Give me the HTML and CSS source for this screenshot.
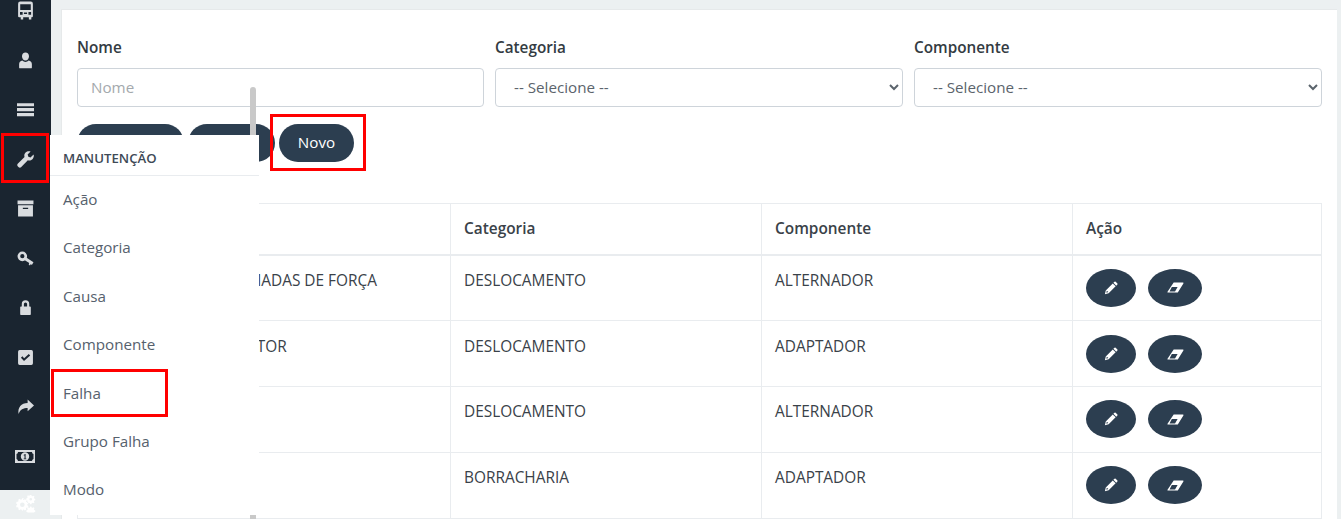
FILE: index.html
```html
<!DOCTYPE html>
<html lang="pt">
<head>
<meta charset="utf-8">
<title>Falha</title>
<link rel="stylesheet" href="styles.css">
</head>
<body>
<div class="app">
  <aside class="sidebar">
    <nav class="side-nav">
      <a class="side-item"><svg viewBox="0 0 16 18" class="ic ic-tall"><path d="M3 0.500h10a2 2 0 0 1 2 2v12a1 1 0 0 1-1 1h-.5v2h-2.300v-2H5.800v2H3.500v-2H2a1 1 0 0 1-1-1v-12a2 2 0 0 1 2-2zM3 3v5.500h10V3zM2.800 10.500v2.500h2.500v-2.500zm8 0v2.500h2.500v-2.500zM6.500 11v1.200h3V11z" fill-rule="evenodd"/></svg></a>
      <a class="side-item"><svg viewBox="0 0 16 16" class="ic"><path d="M8 .5c2 0 3.300 1.500 3.300 3.500S10 8 8 8 4.700 6 4.700 4 6 .5 8 .5zM5 8c.8.900 1.900 1.300 3 1.300s2.200-.4 3-1.300c1.800.5 3 1.500 3 3.500v3a.8.800 0 0 1-.8.800H2.800a.8.800 0 0 1-.8-.8v-3C2 9.500 3.200 8.500 5 8z"/></svg></a>
      <a class="side-item"><svg viewBox="0 0 16 16" class="ic"><path d="M0 2h16v3H0zM0 6.700h16v3H0zM0 11.400h16v3H0z"/></svg></a>
      <a class="side-item"><svg viewBox="0 0 16 16" class="ic"><path d="M15.600 3.200l-2.900 2.800-2-.7-.7-2L12.800.4C11 -.2 9.300.2 8.100 1.400 6.900 2.600 6.600 4.300 7.100 5.700L.7 12.100c-.6.600-.6 1.600 0 2.200l.9.900c.6.600 1.600.6 2.200 0l6.400-6.400c1.400.5 3.100.2 4.300-1 1.200-1.200 1.600-3 1.100-4.600z"/></svg></a>
      <a class="side-item"><svg viewBox="0 0 16 16" class="ic"><path d="M.5 .5h15v3.500H.5zM1 5h14v10.500H1zM5.500 7.200v1.300h5V7.200z" fill-rule="evenodd"/></svg></a>
      <a class="side-item"><svg viewBox="0 0 16 16" class="ic"><path d="M5 1.500a4.500 4.500 0 1 1 0 9 4.500 4.500 0 0 1 0-9zM5 3.800a2 2 0 1 0 0 4 2 2 0 0 0 0-4z" fill-rule="evenodd"/><path d="M8 6.500l7.500 5-1.500 2.500-1-.8-.8 1.300-1.200-.9.500-1.300-4.500-2.800z"/></svg></a>
      <a class="side-item"><svg viewBox="0 0 16 16" class="ic"><path d="M4.500 7V4.700a3.500 3.500 0 0 1 7 0V7h.8c.4 0 .7.300.7.700v6.600c0 .4-.3.700-.7.700H3.700a.7.700 0 0 1-.7-.7V7.700c0-.4.300-.7.700-.7zm2 0h3V4.700a1.500 1.500 0 0 0-3 0z" fill-rule="evenodd"/></svg></a>
      <a class="side-item"><svg viewBox="0 0 16 16" class="ic"><path d="M2.500 1h11A1.500 1.500 0 0 1 15 2.500v11a1.500 1.500 0 0 1-1.500 1.500h-11A1.500 1.500 0 0 1 1 13.500v-11A1.500 1.500 0 0 1 2.500 1zm1.200 7.200L6.600 11.400l5.800-5.400-1.300-1.300-4.400 4.100-1.600-1.900z" fill-rule="evenodd"/></svg></a>
      <a class="side-item"><svg viewBox="0 0 16 16" class="ic"><path d="M10 1.500l6 5.500-6 5.500V9.300C6 9.300 3 10.500 1.500 15 .5 9 4 4.800 10 4.700z"/></svg></a>
      <a class="side-item"><svg viewBox="0 0 20 16" class="ic ic-wide"><path d="M0 1.500h20v13H0zM3 3.500c0 1-.8 2-1.500 2v5c.7 0 1.300 1 1.500 2h14c.2-1 .8-2 1.500-2v-5c-.7 0-1.500-1-1.500-2zM10 3.800a4.200 4.200 0 1 1 0 8.400 4.200 4.200 0 0 1 0-8.400zM9.500 5.500v.8h-.8v.8h.8v2.800h-.8v.8h2.600v-.8h-.7V5.500z" fill-rule="evenodd"/></svg></a>
    </nav>
    <div class="side-foot"><svg viewBox="0 0 20 18" class="ic-gears"><path d="M7.500 4.500l1 .3.8-.9 1.500.9-.4 1.100.7.800 1.200-.1.500 1.700-1.100.5v1l1.100.6-.5 1.600-1.200-.1-.7.800.4 1.100-1.500.9-.8-.9-1 .2-.5 1.100H6.800l-.4-1.200-1-.3-.9.900-1.500-.9.400-1.200-.7-.7-1.200.1L1 10.100l1-.6v-1l-1-.5.500-1.700 1.200.1.700-.8-.4-1.100 1.500-.9.900.9 1-.3.400-1.100h1.700zM7 7a2.200 2.200 0 1 0 0 4.400A2.200 2.200 0 0 0 7 7zM15.500 0l.5 1 .9.200.9-.5.800.9-.5.800.2.900 1 .4v1.200l-1 .4-.3.900.6.800-.9.900-.9-.5-.9.300-.3 1h-1.200l-.3-1-.9-.3-.9.500-.8-.9.500-.9-.3-.8-1-.4V3.200l1-.4.300-.9-.5-.8.800-.9.900.5.900-.2.300-1zM15 2.700a1.300 1.300 0 1 0 0 2.600 1.300 1.300 0 0 0 0-2.600zM15.500 11l.5 1 .9.200.9-.5.800.9-.5.800.2.900 1 .4v1.200l-1 .4-.2.300h-6l-.3-.3-1-.4v-1.200l1-.4.300-.9-.5-.8.800-.9.900.5.900-.2.300-1z" fill-rule="evenodd"/></svg></div>
  </aside>
  <main class="main">
    <section class="card">
      <form class="filters">
        <div class="field"><label class="label">Nome</label><input class="input" placeholder="Nome"></div>
        <div class="field"><label class="label">Categoria</label><select class="input select"><option>-- Selecione --</option></select></div>
        <div class="field"><label class="label">Componente</label><select class="input select"><option>-- Selecione --</option></select></div>
      </form>
      <div class="actions">
        <button class="btn btn-search" type="button" aria-label="Pesquisar"></button>
        <button class="btn btn-clear" type="button" aria-label="Limpar"></button>
        <button class="btn btn-new" type="button">Novo</button>
      </div>
      <table class="table">
        <thead>
          <tr><th class="col-name"></th><th class="col-cat">Categoria</th><th class="col-comp">Componente</th><th>Ação</th></tr>
        </thead>
        <tbody>
          <tr><td>SOBRECARGA NAS TOMADAS DE FORÇA</td><td>DESLOCAMENTO</td><td>ALTERNADOR</td><td class="cell-actions"><button class="round round-edit" type="button"><svg viewBox="0 0 16 16" class="ic-btn"><path d="M12 .8a1 1 0 0 1 1.300 0l2 2a1 1 0 0 1 0 1.300L14 5.400 10.700 2zM10 2.800l3.300 3.300-8 8L1 15.200 2 10.800zM3.200 11l-.5 2.300 2.300-.6z" fill-rule="evenodd"/></svg></button><button class="round round-erase" type="button"><svg viewBox="0 0 18 12" class="ic-erase"><path d="M7 .5H17a.8.800 0 0 1 .6 1.200L11.500 11.500H.8a.6.600 0 0 1-.5-1zM5 5.500L2.500 10.300h6L11.300 5.500z" fill-rule="evenodd"/></svg></button></td></tr>
          <tr><td>FALHA EM LIGAR O MOTOR</td><td>DESLOCAMENTO</td><td>ADAPTADOR</td><td class="cell-actions"><button class="round round-edit" type="button"><svg viewBox="0 0 16 16" class="ic-btn"><path d="M12 .8a1 1 0 0 1 1.300 0l2 2a1 1 0 0 1 0 1.300L14 5.400 10.700 2zM10 2.800l3.300 3.300-8 8L1 15.200 2 10.800zM3.200 11l-.5 2.300 2.300-.6z" fill-rule="evenodd"/></svg></button><button class="round round-erase" type="button"><svg viewBox="0 0 18 12" class="ic-erase"><path d="M7 .5H17a.8.800 0 0 1 .6 1.200L11.500 11.500H.8a.6.600 0 0 1-.5-1zM5 5.500L2.500 10.300h6L11.300 5.500z" fill-rule="evenodd"/></svg></button></td></tr>
          <tr><td></td><td>DESLOCAMENTO</td><td>ALTERNADOR</td><td class="cell-actions"><button class="round round-edit" type="button"><svg viewBox="0 0 16 16" class="ic-btn"><path d="M12 .8a1 1 0 0 1 1.300 0l2 2a1 1 0 0 1 0 1.300L14 5.400 10.700 2zM10 2.800l3.300 3.300-8 8L1 15.200 2 10.800zM3.200 11l-.5 2.300 2.300-.6z" fill-rule="evenodd"/></svg></button><button class="round round-erase" type="button"><svg viewBox="0 0 18 12" class="ic-erase"><path d="M7 .5H17a.8.800 0 0 1 .6 1.200L11.500 11.500H.8a.6.600 0 0 1-.5-1zM5 5.500L2.500 10.300h6L11.300 5.500z" fill-rule="evenodd"/></svg></button></td></tr>
          <tr><td></td><td>BORRACHARIA</td><td>ADAPTADOR</td><td class="cell-actions"><button class="round round-edit" type="button"><svg viewBox="0 0 16 16" class="ic-btn"><path d="M12 .8a1 1 0 0 1 1.300 0l2 2a1 1 0 0 1 0 1.300L14 5.400 10.700 2zM10 2.800l3.300 3.300-8 8L1 15.200 2 10.800zM3.200 11l-.5 2.300 2.300-.6z" fill-rule="evenodd"/></svg></button><button class="round round-erase" type="button"><svg viewBox="0 0 18 12" class="ic-erase"><path d="M7 .5H17a.8.800 0 0 1 .6 1.200L11.500 11.500H.8a.6.600 0 0 1-.5-1zM5 5.500L2.500 10.300h6L11.300 5.500z" fill-rule="evenodd"/></svg></button></td></tr>
        </tbody>
      </table>
    </section>
  </main>
  <div class="scroll-thumb"></div>
  <div class="flyout">
    <div class="flyout-title">MANUTENÇÃO</div>
    <a class="flyout-item">Ação</a>
    <a class="flyout-item">Categoria</a>
    <a class="flyout-item">Causa</a>
    <a class="flyout-item">Componente</a>
    <a class="flyout-item">Falha</a>
    <a class="flyout-item">Grupo Falha</a>
    <a class="flyout-item">Modo</a>
  </div>
  <div class="mark mark-tool"></div>
  <div class="mark mark-new"></div>
  <div class="mark mark-falha"></div>
</div>
</body>
</html>
```
FILE: styles.css
```css
* { box-sizing: border-box; }
html, body { margin: 0; height: 100%; overflow: hidden; }
body { font-family: "Open Sans", sans-serif; font-size: 15.2px; color: #3a4249; background: #ecf0f1; }
.app { position: relative; display: flex; width: 1341px; height: 519px; overflow: hidden; }
.sidebar { width: 51px; flex: none; height: 519px; display: flex; flex-direction: column; background: #ecf0f1; }
.side-nav { background: #1a2530; display: flex; flex-direction: column; margin-top: -14px; flex: none; height: 504px; }
.side-item { height: 49.5px; display: flex; align-items: center; justify-content: center; flex: none; padding-right: 1px; }
.ic { width: 17px; height: 17px; fill: #d9dcdf; }
.ic-tall { height: 19px; }
.ic-wide { width: 20px; }
.side-foot { height: 29px; display: flex; align-items: center; justify-content: center; padding-right: 1px; }
.ic-gears { width: 21px; height: 19px; fill: #fff; }
.main { flex: 1; min-width: 0; padding: 9px 4px 0 10px; }
.card { background: #fff; border: 1px solid #e6e9ea; border-right: 0; height: 540px; padding: 27px 15px 0 15px; }
.filters { display: grid; grid-template-columns: 407px 408px 408px; column-gap: 11px; }
.field { display: flex; flex-direction: column; }
.label { font-weight: 600; font-size: 15.3px; line-height: 20px; margin-bottom: 11px; color: #333b42; }
.input { height: 39px; width: 100%; border: 1px solid #ced4da; border-radius: 4px; background: #fff; padding: 0 13px 2px; font: 15.2px "Open Sans", sans-serif; color: #5b646c; }
.input::placeholder { color: #a4a9ad; opacity: 1; }
.select { padding: 0 10px 2px 14px; }
.actions { display: flex; gap: 4px; margin-top: 17px; }
.btn { height: 38px; border: 0; border-radius: 19px; background: #2c3e50; color: #fff; font: 15.2px "Open Sans", sans-serif; padding: 0 0 2px; }
.btn-search { width: 107px; }
.btn-clear { width: 87px; }
.btn-new { width: 75px; }
.table { border-collapse: collapse; table-layout: fixed; width: 100%; margin-top: 41px; border: 1px solid #e9ecef; font-size: 15.4px; }
.table th { height: 51px; padding: 0 13px; text-align: left; font-weight: 600; color: #3a4249; border: 1px solid #e9ecef; border-bottom-width: 2px; }
.table td { height: 66px; padding: 15px 13px 0; vertical-align: top; border: 1px solid #e9ecef; line-height: 20px; }
.table tr:nth-child(2) td { padding-top: 16px; }
.col-name { width: 373px; }
.col-cat { width: 311px; }
.col-comp { width: 311px; }
.table td.cell-actions { padding-top: 13px; }
.table tr:nth-child(2) td.cell-actions { padding-top: 14px; }
.round { height: 38px; border: 0; border-radius: 50%; background: #2c3e50; padding: 0; display: inline-flex; align-items: center; justify-content: center; vertical-align: top; }
.round-edit { width: 50px; margin-right: 12px; }
.round-erase { width: 54px; }
.ic-btn { width: 14px; height: 14px; fill: #fff; }
.ic-erase { width: 17px; height: 11px; fill: #fff; }
.scroll-thumb { position: absolute; left: 250px; top: 87px; width: 6px; height: 445px; background: #c9c9c9; border-radius: 3px; }
.flyout { position: absolute; left: 50px; top: 135px; width: 209px; height: 380px; background: #fff; }
.flyout-title { height: 41px; padding: 6px 13px 0; display: flex; align-items: center; font-size: 13.2px; font-weight: 600; color: #3e4a56; border-bottom: 1px solid #e9ecef; }
.flyout-item { display: block; height: 48.4px; padding: 0 13px; line-height: 47.5px; font-size: 15.2px; color: #56616d; }
.mark { position: absolute; border: 3px solid #f00; }
.mark-tool { left: 1px; top: 133px; width: 48px; height: 50px; }
.mark-new { left: 270px; top: 114px; width: 96px; height: 57px; }
.mark-falha { left: 51px; top: 369px; width: 117px; height: 48px; }
```
